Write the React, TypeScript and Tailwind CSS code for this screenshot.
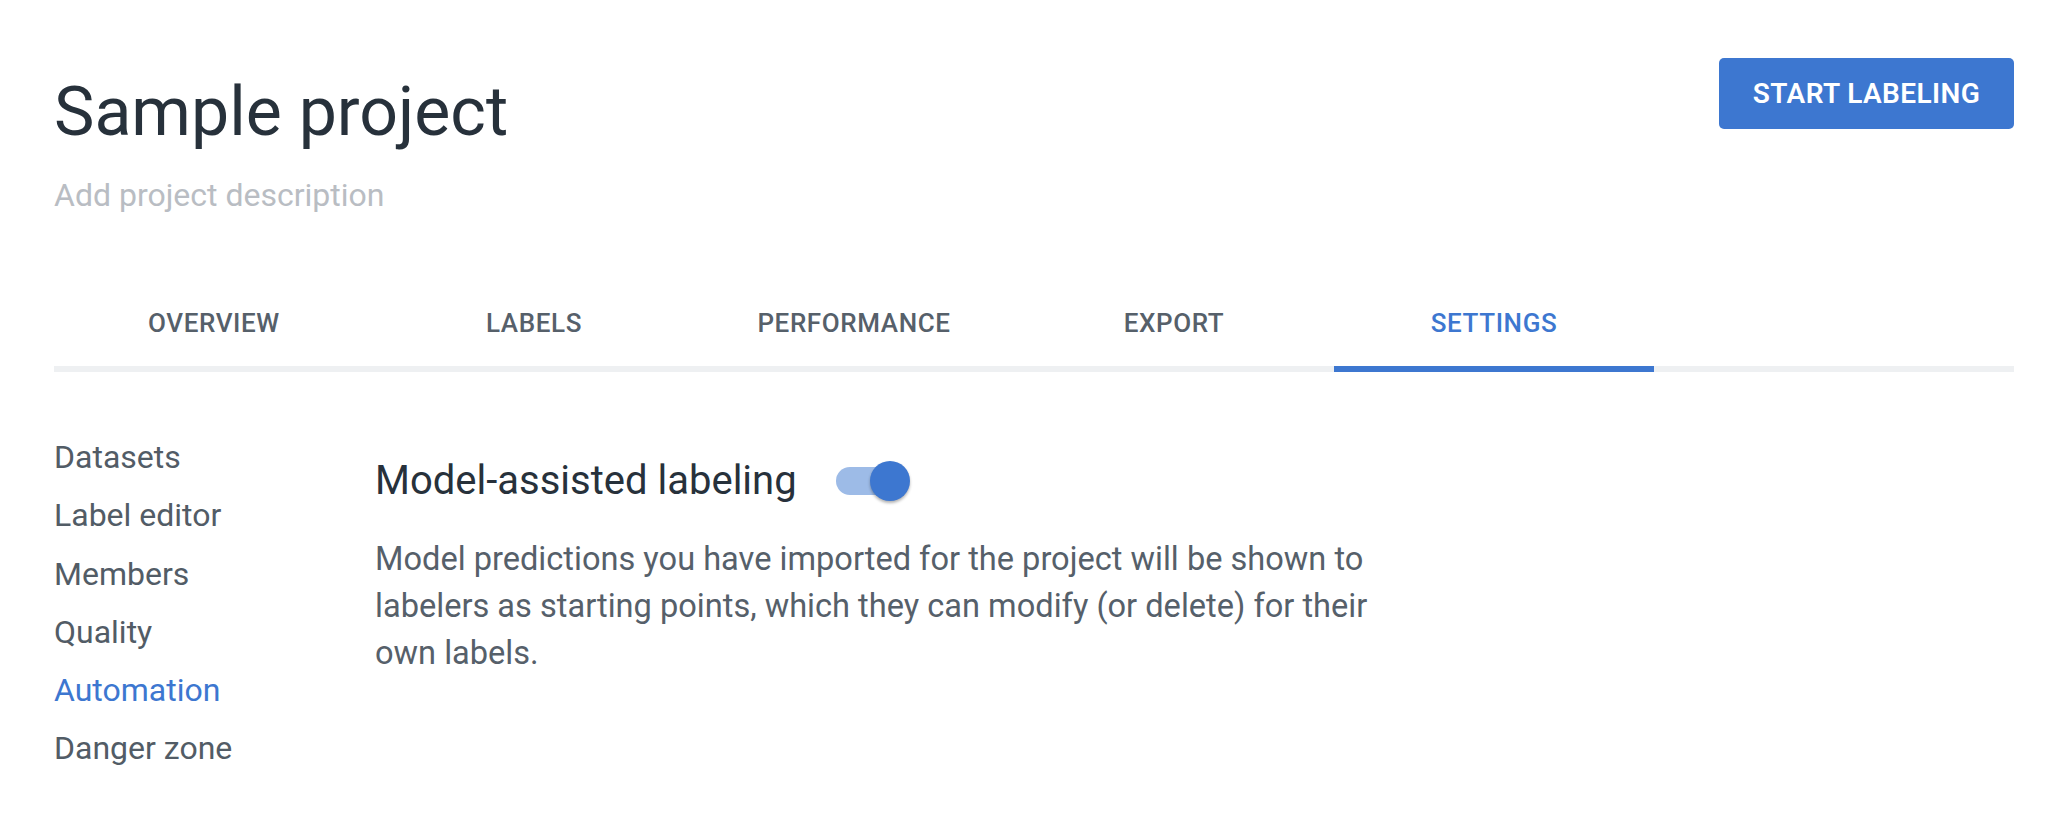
const tabs = ["OVERVIEW", "LABELS", "PERFORMANCE", "EXPORT", "SETTINGS"];
const navItems = ["Datasets", "Label editor", "Members", "Quality", "Automation", "Danger zone"];

function Toggle({ on }: { on: boolean }) {
  return (
    <div className="relative ml-[39px] h-[28px] w-[68px] rounded-full bg-[#9dbbe7]">
      <div
        className={`absolute top-[-6px] h-[40px] w-[40px] rounded-full bg-[#3d77d0] shadow-[0_2px_3px_rgba(0,0,0,0.3)] ${
          on ? "right-[-6px]" : "left-[-6px]"
        }`}
      />
    </div>
  );
}

export default function App() {
  return (
    <div className="min-h-screen bg-white pl-[54px] pr-[40px] pt-[58px] font-['Roboto',sans-serif]">
      {/* Header */}
      <div className="flex items-start justify-between">
        <div>
          <h1 className="mt-[12px] text-[68px] leading-[84px] font-normal text-[#27313b]">Sample project</h1>
          <p className="mt-[21px] text-[32px] leading-[40px] text-[#b9bdc3]">Add project description</p>
        </div>
        <button className="flex h-[71px] w-[295px] items-center justify-center rounded-[5px] bg-[#3d77d0] text-[28px] font-semibold tracking-[0.4px] text-white">
          START LABELING
        </button>
      </div>

      {/* Tabs */}
      <div className="mt-[65px] flex border-b-[6px] border-[#eef0f2]">
        {tabs.map((tab) => {
          const active = tab === "SETTINGS";
          return (
            <div
              key={tab}
              className={`-mb-[6px] flex h-[92px] w-[320px] items-center justify-center border-b-[6px] text-[26px] leading-[32px] font-medium tracking-[0.6px] ${
                active ? "border-[#3d77d0] text-[#3d77d0]" : "border-transparent text-[#56606a]"
              }`}
            >
              <span className="-mt-[1px]">{tab}</span>
            </div>
          );
        })}
      </div>

      {/* Body */}
      <div className="mt-[56px] flex">
        <nav className="flex w-[321px] flex-col">
          {navItems.map((item) => (
            <a
              key={item}
              className={`text-[32px] leading-[58.3px] ${item === "Automation" ? "text-[#3d77d0]" : "text-[#525c66]"}`}
            >
              {item}
            </a>
          ))}
        </nav>

        <div className="mt-[29px]">
          <div className="flex h-[48px] items-center">
            <h2 className="text-[40px] leading-[48px] font-normal text-[#27313b]">Model-assisted labeling</h2>
            <Toggle on />
          </div>
          <p className="mt-[31px] max-w-[1010px] text-[32.6px] leading-[47px] text-[#56606a]">
            Model predictions you have imported for the project will be shown to labelers as starting points, which they
            can modify (or delete) for their own labels.
          </p>
        </div>
      </div>
    </div>
  );
}
